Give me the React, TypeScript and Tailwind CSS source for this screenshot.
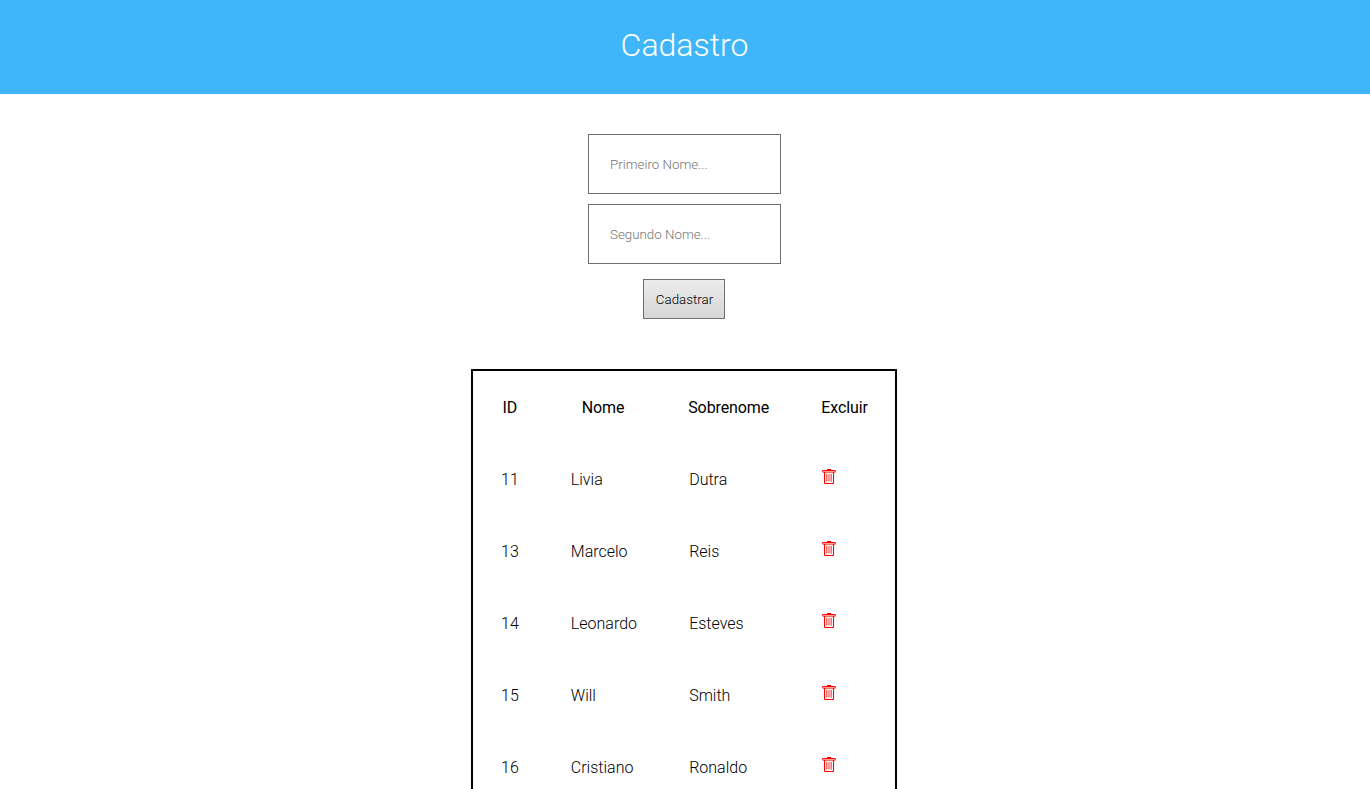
const rows = [
  ["11", "Livia", "Dutra"],
  ["13", "Marcelo", "Reis"],
  ["14", "Leonardo", "Esteves"],
  ["15", "Will", "Smith"],
  ["16", "Cristiano", "Ronaldo"],
];

function Trash() {
  return (
    <svg width="14" height="15" viewBox="0 0 14 15" fill="none" stroke="#ff0000" className="block -mt-px">
      <path d="M5 .5h4" strokeWidth="1" />
      <rect x=".5" y="1.5" width="13" height="1.6" rx=".5" strokeWidth="1" />
      <path d="M2.5 3v10.6c0 .5.4.9.9.9h7.2c.5 0 .9-.4.9-.9V3" strokeWidth="1.1" />
      <path d="M4.8 5v7.5M7 5v7.5M9.2 5v7.5" strokeWidth="1" strokeOpacity=".85" />
    </svg>
  );
}

export default function App() {
  return (
    <div className="h-screen overflow-hidden bg-white font-['Roboto',sans-serif] font-light text-black">
      <div className="w-[1369px]">
        <header className="h-[94px] bg-[#3fb6fa] flex items-center justify-center w-[1370px] pr-px">
          <h1 className="text-[32px] font-light text-white leading-none -mt-[5px]">Cadastro</h1>
        </header>
        <form className="flex flex-col items-center pt-10">
          <input
            placeholder="Primeiro Nome..."
            className="w-[193px] h-[60px] border border-[#6f6f6f] pl-[21px] text-[13.33px] font-light outline-none placeholder:text-[#757575]"
          />
          <input
            placeholder="Segundo Nome..."
            className="mt-[10px] w-[193px] h-[60px] border border-[#6f6f6f] pl-[21px] text-[13.33px] font-light outline-none placeholder:text-[#757575]"
          />
          <button
            type="button"
            className="mt-[15px] mr-px w-[82px] h-10 pt-px pl-px border border-[#6f6f6f] bg-gradient-to-b from-[#ececec] to-[#d6d6d6] text-[13.33px] font-light text-black"
          >
            Cadastrar
          </button>
        </form>
        <div className="flex justify-center mt-[50px] pr-px">
          <table className="w-[426px] border-2 border-black border-separate border-spacing-[2px] text-base">
            <thead>
              <tr>
                <th className="py-[25px] pl-[26px] pr-[24px] font-normal leading-5 tracking-[-0.1px]">ID</th>
                <th className="p-[25px] font-normal leading-5 tracking-[-0.1px]">Nome</th>
                <th className="p-[25px] font-normal leading-5 tracking-[-0.1px]">Sobrenome</th>
                <th className="p-[25px] font-normal leading-5 tracking-[-0.1px]">Excluir</th>
              </tr>
            </thead>
            <tbody>
              {rows.map((r) => (
                <tr key={r[0]}>
                  <td className="py-[25px] pl-[26px] pr-[24px] leading-5">{r[0]}</td>
                  <td className="py-[25px] pl-[26px] pr-[24px] leading-5">{r[1]}</td>
                  <td className="py-[25px] pl-[26px] pr-[24px] leading-5">{r[2]}</td>
                  <td className="py-[25px] pl-[26px] pr-[24px] leading-5 align-top">
                    <Trash />
                  </td>
                </tr>
              ))}
            </tbody>
          </table>
        </div>
      </div>
    </div>
  );
}
